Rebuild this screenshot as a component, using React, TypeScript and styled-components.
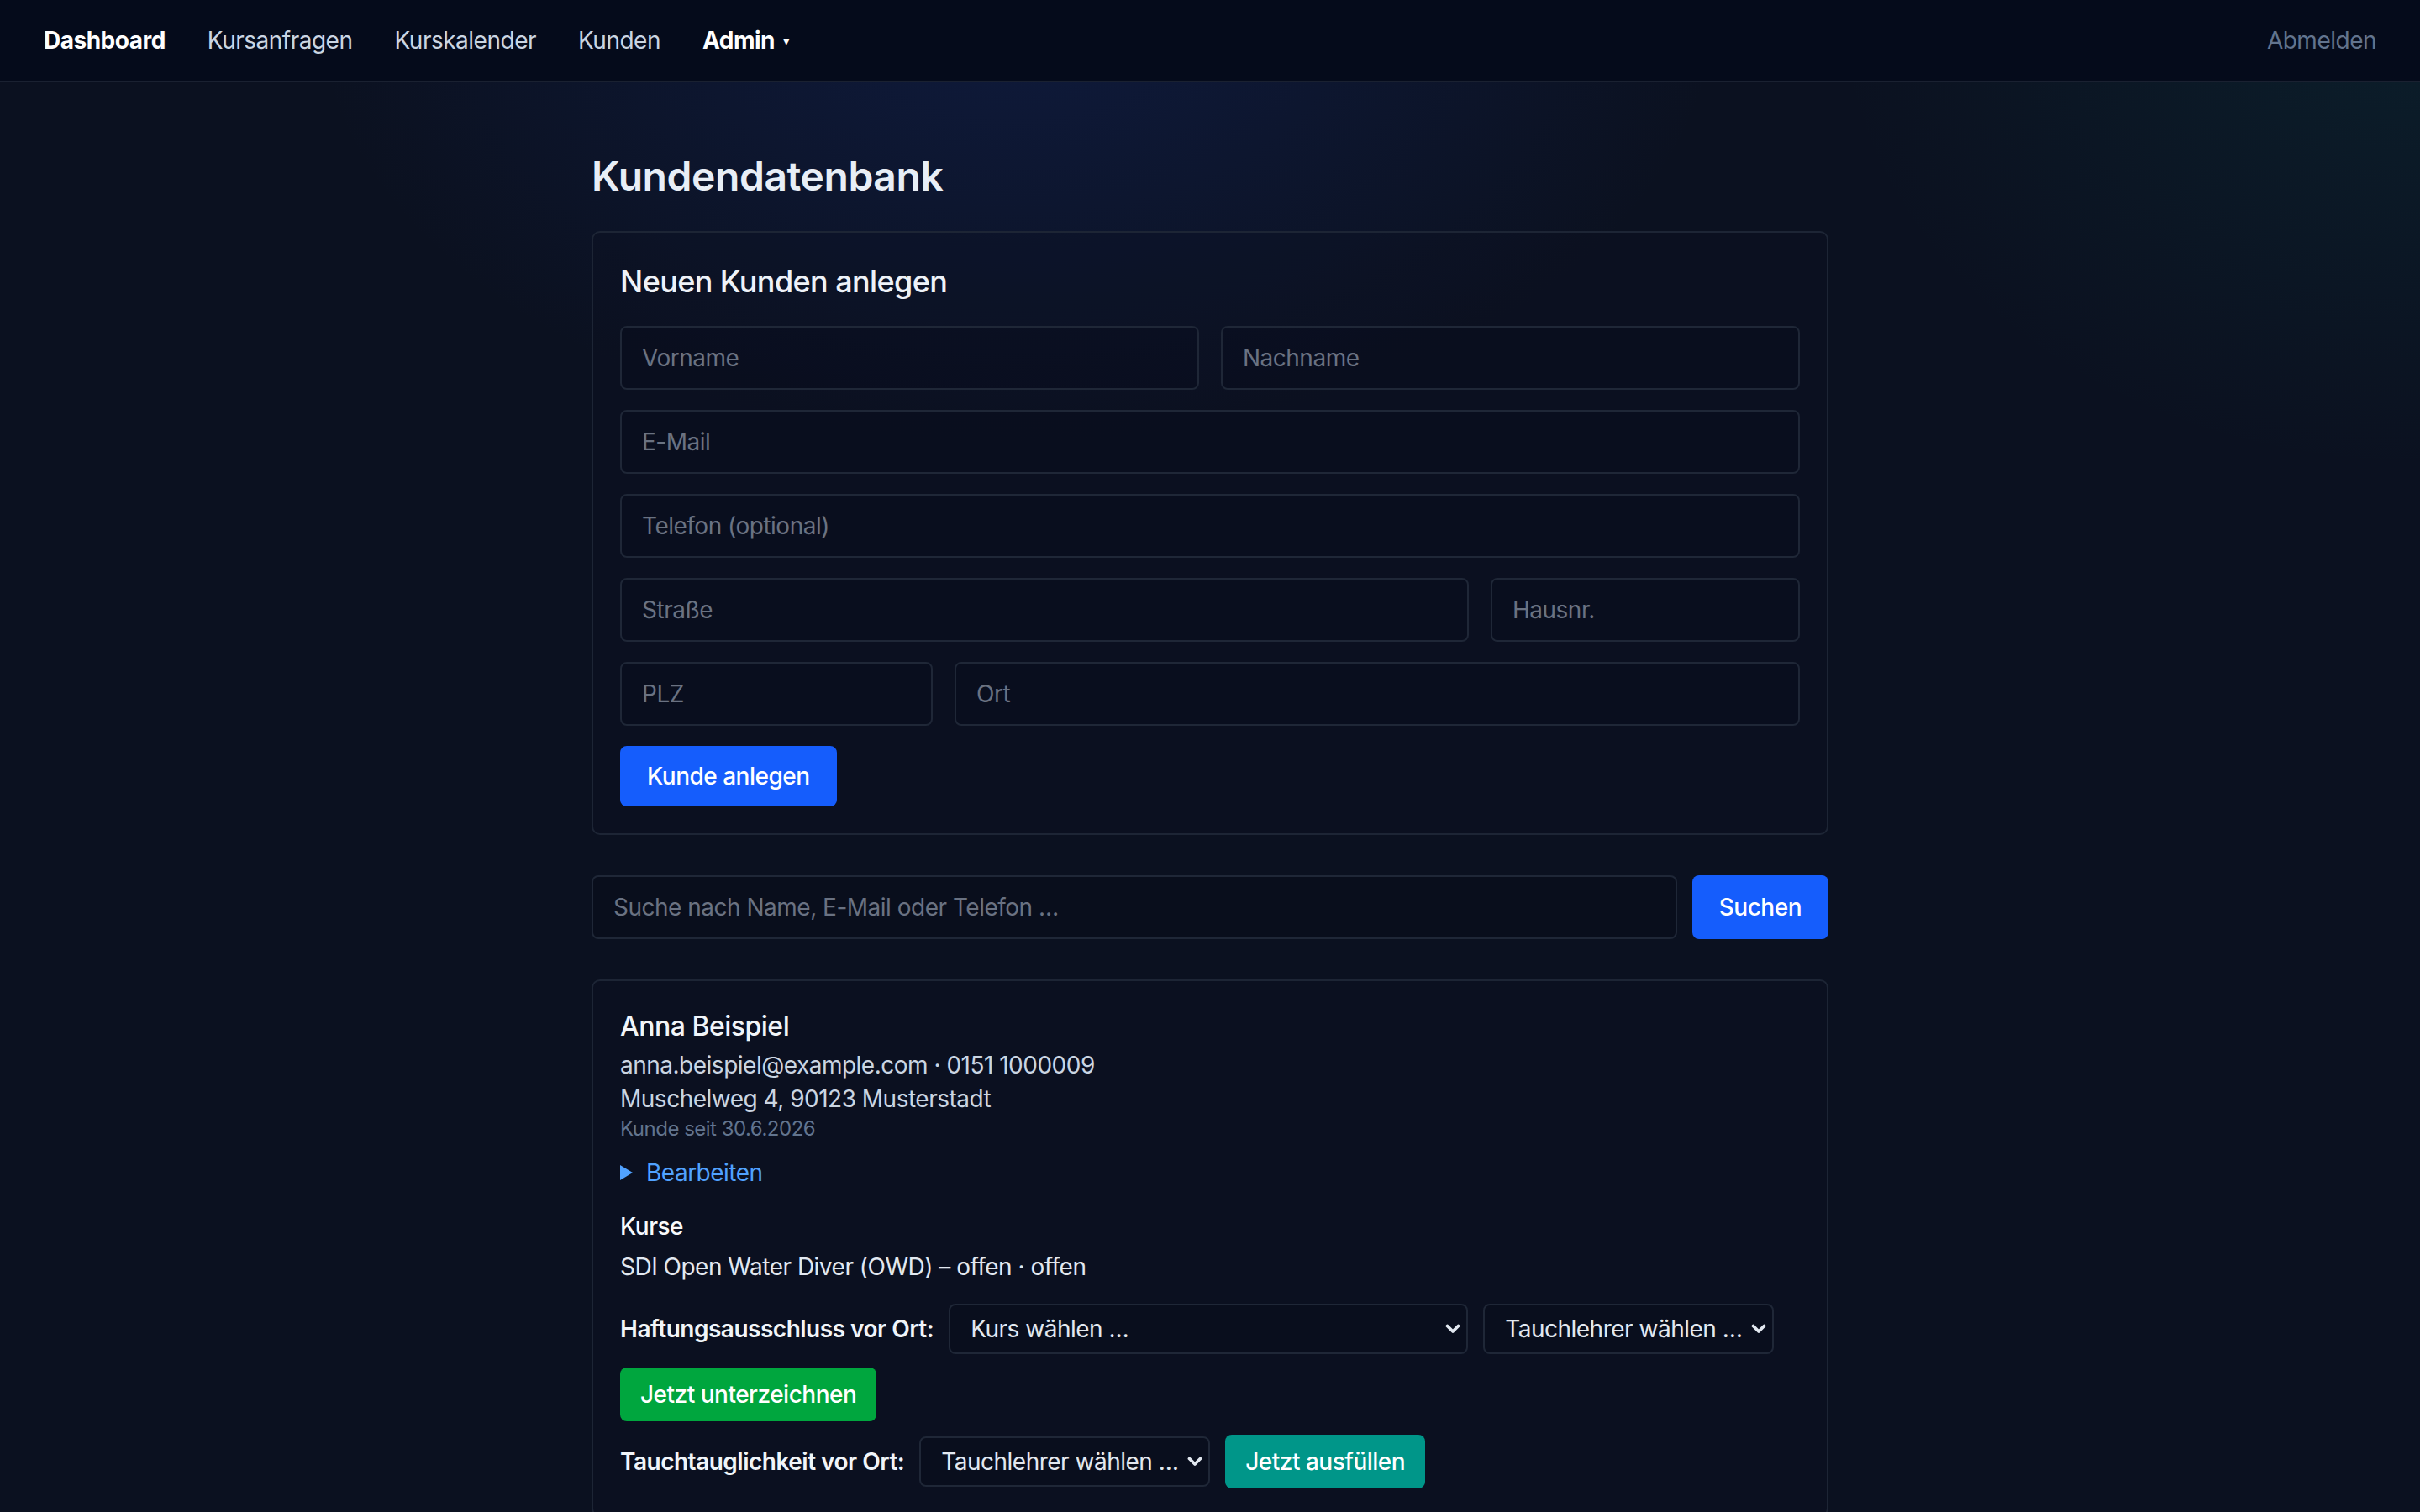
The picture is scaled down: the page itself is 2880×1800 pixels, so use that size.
import React from "react";
import styled, { createGlobalStyle } from "styled-components";

const GlobalStyle = createGlobalStyle`
  html, body { margin: 0; padding: 0; min-height: 100%; }
  body {
    font-family: Inter, "Noto Sans", "Liberation Sans", sans-serif;
    letter-spacing: -0.5px;
    color: #e2e8f0;
    background:
      radial-gradient(1200px 760px at 42% 0%, rgba(30, 64, 175, 0.20), rgba(30, 64, 175, 0) 70%),
      radial-gradient(1000px 800px at 100% 0%, rgba(13, 148, 136, 0.10), rgba(13, 148, 136, 0) 70%),
      #0b1120;
    background-repeat: no-repeat;
    background-color: #0b1120;
    min-height: 100vh;
  }
  * { box-sizing: border-box; }
  input, select, button { letter-spacing: inherit; }
`;

const Nav = styled.nav`
  display: flex;
  align-items: center;
  gap: 50px;
  height: 98px;
  padding: 0 52px 0 52px;
  background: #050b1b;
  border-bottom: 2px solid #1a2131;
`;

const NavLink = styled.a<{ $active?: boolean }>`
  font-size: 28px;
  line-height: 40px;
  font-weight: ${(p) => (p.$active ? 700 : 400)};
  color: ${(p) => (p.$active ? "#ffffff" : "#cad5e2")};
  text-decoration: none;
  display: inline-flex;
  align-items: center;
  gap: 10px;
  white-space: nowrap;
`;

const Caret = styled.span`
  font-family: "DejaVu Sans", sans-serif;
  font-size: 15px;
  line-height: 1;
  color: #ffffff;
  margin-top: 2px;
`;

const Logout = styled.a`
  margin-left: auto;
  font-size: 28px;
  line-height: 40px;
  color: #62748e;
  text-decoration: none;
`;

const Main = styled.main`
  width: 1472px;
  margin: 0 auto;
  padding: 80px 0 80px;
`;

const Title = styled.h1`
  margin: 0 0 33px;
  font-size: 48px;
  line-height: 64px;
  font-weight: 600;
  color: #e8eef6;
  letter-spacing: -0.45px;
`;

const Stack = styled.div`
  display: flex;
  flex-direction: column;
  gap: 48px;
`;

const Card = styled.section`
  border: 2px solid #1d2535;
  border-radius: 10px;
  padding: 32px;
  background: rgba(10, 16, 32, 0.25);
`;

const CardTitle = styled.h2`
  margin: 0 0 27px;
  font-size: 36px;
  line-height: 52px;
  font-weight: 500;
  color: #eef2f8;
  letter-spacing: -0.6px;
`;

const Form = styled.div`
  display: flex;
  flex-direction: column;
  gap: 24px;
  align-items: stretch;
`;

const Row = styled.div<{ $cols: string }>`
  display: grid;
  grid-template-columns: ${(p) => p.$cols};
  column-gap: 26px;
`;

const Input = styled.input`
  display: block;
  width: 100%;
  height: 76px;
  padding: 16px 24px;
  border: 2px solid #1f2737;
  border-radius: 8px;
  background: rgba(5, 9, 22, 0.25);
  color: #e2e8f0;
  font-family: inherit;
  font-size: 28px;
  line-height: 40px;
  outline: none;
  &::placeholder { color: #6a7282; }
`;

const Button = styled.button<{ $tone: "blue" | "green" | "teal"; $pad: string }>`
  display: inline-flex;
  align-items: center;
  justify-content: center;
  border: none;
  border-radius: 8px;
  padding: ${(p) => p.$pad};
  font-family: inherit;
  font-size: 28px;
  line-height: 40px;
  font-weight: 500;
  color: #ffffff;
  white-space: nowrap;
  cursor: pointer;
  background: ${(p) =>
    p.$tone === "blue" ? "#155dfc" : p.$tone === "green" ? "#00a63e" : "#009689"};
`;

const ButtonRow = styled.div<{ $mt?: number }>`
  display: flex;
  margin-top: ${(p) => p.$mt ?? 0}px;
`;

const SearchRow = styled.div`
  display: flex;
  gap: 18px;
  align-items: stretch;
`;

const SearchInput = styled(Input)`
  flex: 1;
  background: rgba(5, 9, 22, 0.35);
`;

const Name = styled.h3`
  margin: 0;
  font-size: 32px;
  line-height: 44px;
  font-weight: 500;
  color: #f1f5f9;
`;

const Info = styled.div<{ $first?: boolean }>`
  margin-top: ${(p) => (p.$first ? "4px" : "0")};
  font-size: 28px;
  line-height: 40px;
  color: #cad5e2;
`;

const Since = styled.div`
  font-size: 24px;
  line-height: 32px;
  color: #62748e;
`;

const Details = styled.details`
  margin-top: 16px;
`;

const Summary = styled.summary`
  list-style: none;
  display: flex;
  align-items: center;
  gap: 16px;
  font-size: 28px;
  line-height: 40px;
  color: #51a2ff;
  cursor: pointer;
  &::-webkit-details-marker { display: none; }
`;

const SectionLabel = styled.div`
  margin-top: 24px;
  font-size: 28px;
  line-height: 40px;
  font-weight: 500;
  color: #f8fafc;
`;

const Course = styled.div`
  margin-top: 8px;
  font-size: 28px;
  line-height: 40px;
  color: #e2e8f0;
`;

const ActionRow = styled.div<{ $mt: number }>`
  display: flex;
  align-items: center;
  gap: 18px;
  margin-top: ${(p) => p.$mt}px;
`;

const ActionLabel = styled.span`
  font-size: 28px;
  line-height: 40px;
  font-weight: 600;
  color: #f1f5f9;
  white-space: nowrap;
`;

const SelectWrap = styled.div<{ $w: number }>`
  position: relative;
  width: ${(p) => p.$w}px;
  flex: none;
`;

const Select = styled.select`
  appearance: none;
  -webkit-appearance: none;
  display: block;
  width: 100%;
  height: 60px;
  padding: 0 28px 0 24px;
  border: 2px solid #1f2737;
  border-radius: 8px;
  background: rgba(5, 9, 22, 0.3);
  color: #e2e8f0;
  font-family: inherit;
  font-size: 28px;
  line-height: 40px;
  outline: none;
`;

const Chevron = styled.svg`
  position: absolute;
  right: 9px;
  top: 50%;
  transform: translateY(-50%);
  pointer-events: none;
`;

function ChevronDown() {
  return (
    <Chevron width="18" height="12" viewBox="0 0 18 12" aria-hidden>
      <path d="M2.5 2.5 L9 9 L15.5 2.5" fill="none" stroke="#e2e8f0" strokeWidth="3.8" strokeLinecap="round" strokeLinejoin="round" />
    </Chevron>
  );
}

function Dropdown({ width, label }: { width: number; label: string }) {
  return (
    <SelectWrap $w={width}>
      <Select defaultValue="">
        <option value="">{label}</option>
      </Select>
      <ChevronDown />
    </SelectWrap>
  );
}

export default function App() {
  return (
    <>
      <GlobalStyle />
      <Nav>
        <NavLink href="#" $active>Dashboard</NavLink>
        <NavLink href="#">Kursanfragen</NavLink>
        <NavLink href="#">Kurskalender</NavLink>
        <NavLink href="#">Kunden</NavLink>
        <NavLink href="#" $active>
          Admin <Caret>▾</Caret>
        </NavLink>
        <Logout href="#">Abmelden</Logout>
      </Nav>
      <Main>
        <Title>Kundendatenbank</Title>
        <Stack>
          <Card>
            <CardTitle>Neuen Kunden anlegen</CardTitle>
            <Form>
              <Row $cols="1fr 1fr">
                <Input placeholder="Vorname" />
                <Input placeholder="Nachname" />
              </Row>
              <Row $cols="1fr">
                <Input placeholder="E-Mail" />
              </Row>
              <Row $cols="1fr">
                <Input placeholder="Telefon (optional)" />
              </Row>
              <Row $cols="1fr 368px">
                <Input placeholder="Straße" />
                <Input placeholder="Hausnr." />
              </Row>
              <Row $cols="372px 1fr">
                <Input placeholder="PLZ" />
                <Input placeholder="Ort" />
              </Row>
              <ButtonRow>
                <Button $tone="blue" $pad="16px 32px">Kunde anlegen</Button>
              </ButtonRow>
            </Form>
          </Card>

          <SearchRow>
            <SearchInput placeholder="Suche nach Name, E-Mail oder Telefon …" />
            <Button $tone="blue" $pad="0 32px">Suchen</Button>
          </SearchRow>

          <Card>
            <Name>Anna Beispiel</Name>
            <Info $first>anna.beispiel@example.com · 0151 1000009</Info>
            <Info>Muschelweg 4, 90123 Musterstadt</Info>
            <Since>Kunde seit 30.6.2026</Since>
            <Details>
              <Summary>
                <svg width="15" height="18" viewBox="0 0 15 18" aria-hidden>
                  <polygon points="0,0 15,9 0,18" fill="#51a2ff" />
                </svg>
                Bearbeiten
              </Summary>
            </Details>
            <SectionLabel>Kurse</SectionLabel>
            <Course>SDI Open Water Diver (OWD) – offen · offen</Course>
            <ActionRow $mt={24}>
              <ActionLabel>Haftungsausschluss vor Ort:</ActionLabel>
              <Dropdown width={618} label="Kurs wählen …" />
              <Dropdown width={346} label="Tauchlehrer wählen …" />
            </ActionRow>
            <ButtonRow $mt={16}>
              <Button $tone="green" $pad="12px 24px">Jetzt unterzeichnen</Button>
            </ButtonRow>
            <ActionRow $mt={16}>
              <ActionLabel>Tauchtauglichkeit vor Ort:</ActionLabel>
              <Dropdown width={346} label="Tauchlehrer wählen …" />
              <Button $tone="teal" $pad="12px 24px">Jetzt ausfüllen</Button>
            </ActionRow>
          </Card>
        </Stack>
      </Main>
    </>
  );
}
